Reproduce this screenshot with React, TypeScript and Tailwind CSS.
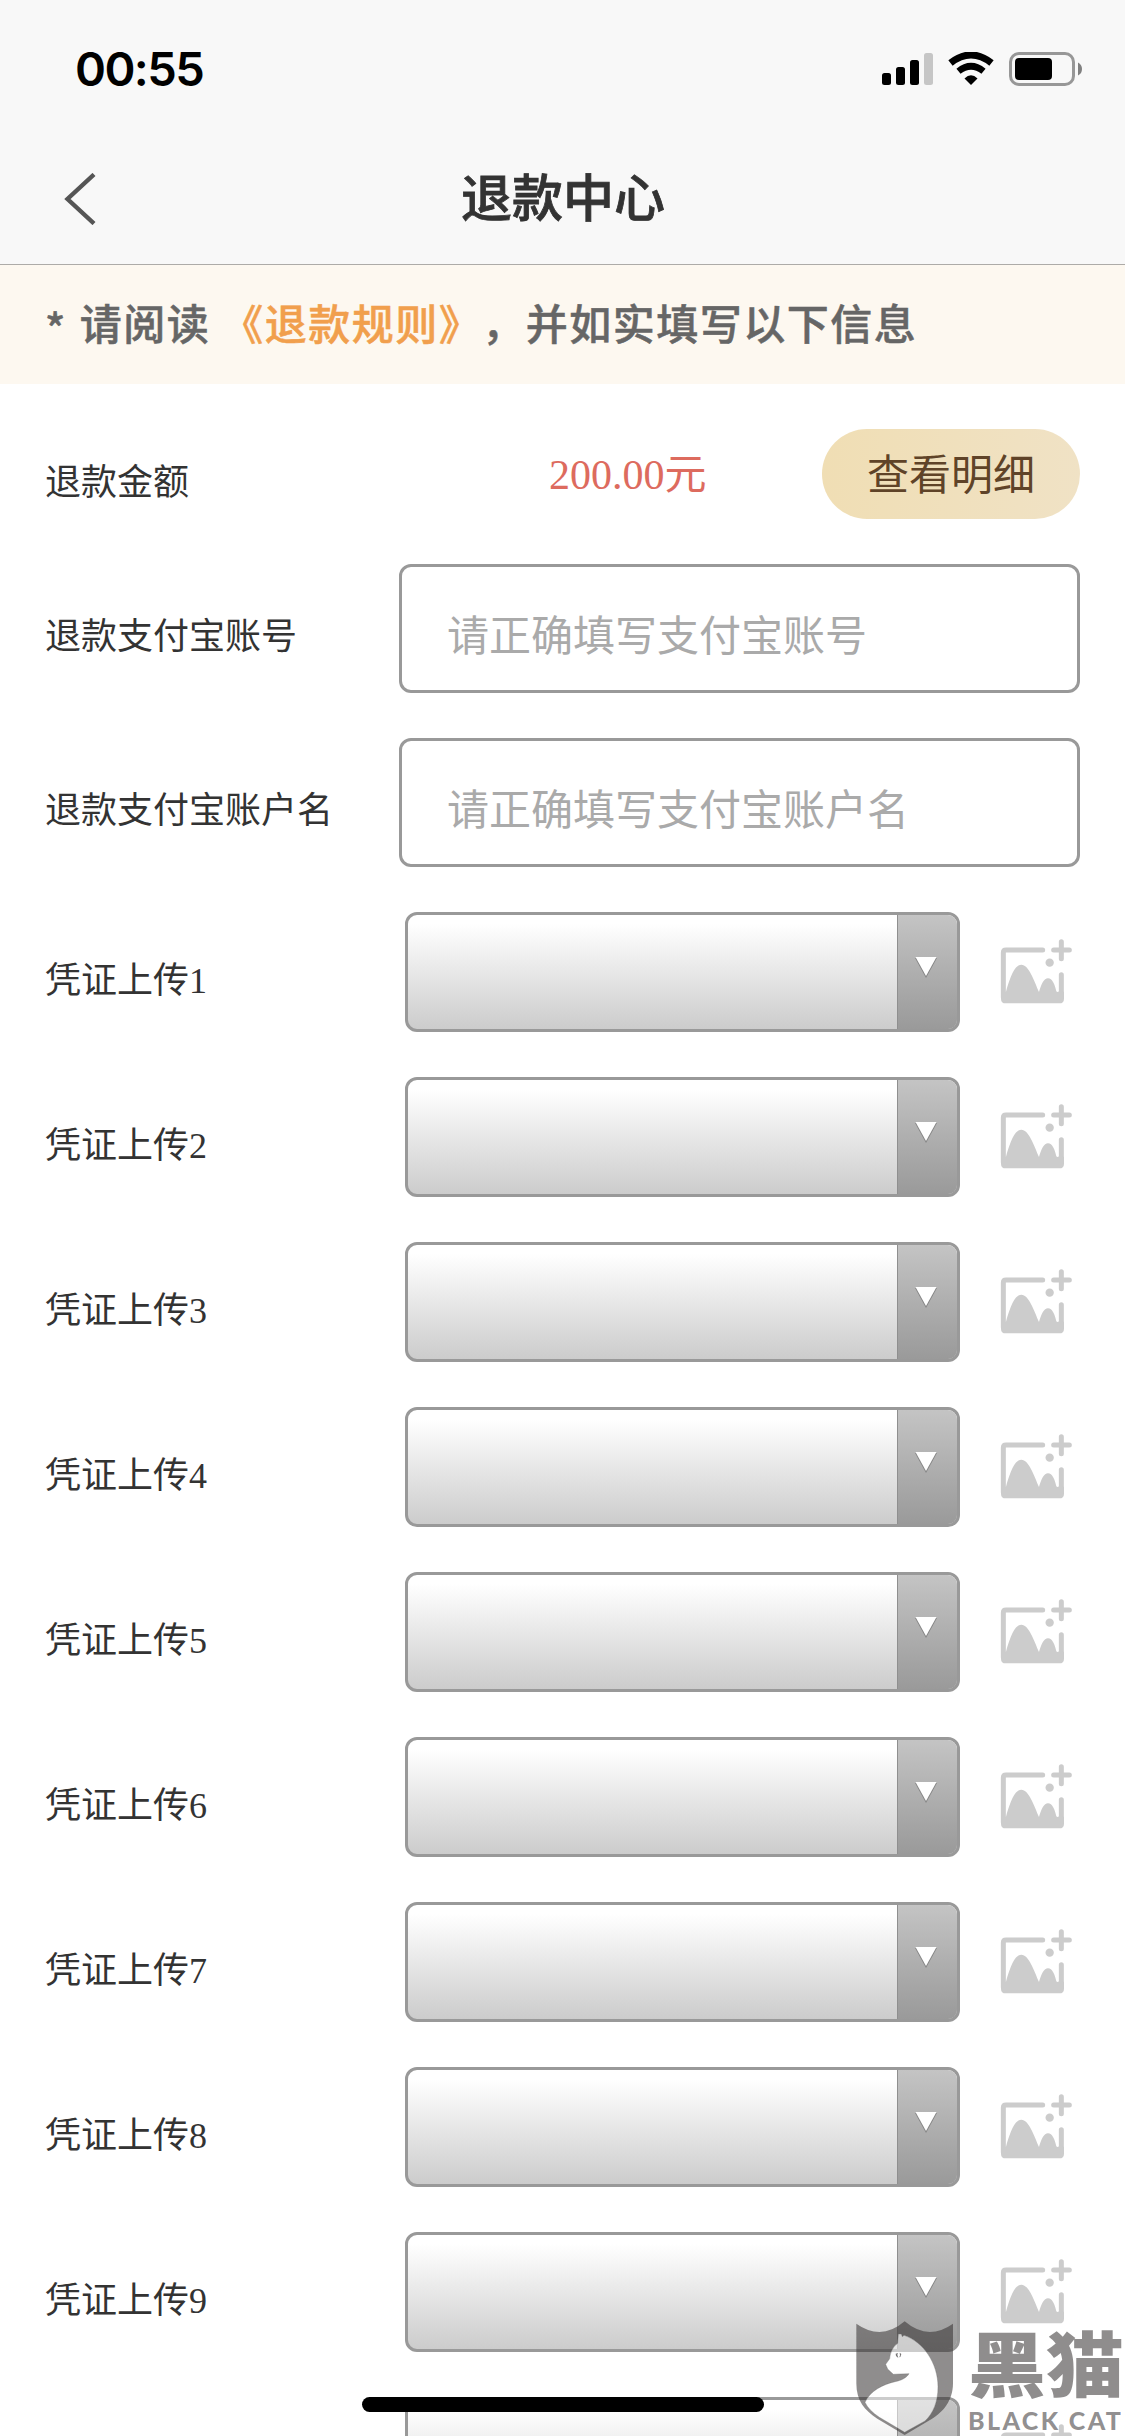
import { ReactNode } from 'react';

const vouchers = [1, 2, 3, 4, 5, 6, 7, 8, 9];

function StatusBar() {
  return (
    <div className="h-[132px] flex justify-between pl-[75px] pr-[43px] pt-[52px]">
      <span className="font-['Inter'] font-semibold text-[47px] leading-[34px] tracking-[-1.6px] text-black">
        00:55
      </span>
      <svg width="200" height="34" viewBox="0 0 200 34">
        <rect x="0" y="21" width="9" height="12" rx="2.5" />
        <rect x="14" y="15" width="9" height="18" rx="2.5" />
        <rect x="28" y="8" width="9" height="25" rx="2.5" />
        <rect x="42" y="1" width="9" height="32" rx="2.5" fill="#c6c6c6" />
        <path d="M68.500 11Q89 -5 109.500 11" fill="none" stroke="#000" strokeWidth="7" />
        <path d="M76.500 19.300Q89 9.200 101.500 19.300" fill="none" stroke="#000" strokeWidth="6.6" />
        <path d="M82.500 26.500Q89 20 95.500 26.500L89 33Z" />
        <rect x="128.500" y="1.500" width="63" height="31" rx="8.500" fill="none" stroke="#979797" strokeWidth="3" />
        <rect x="133" y="6" width="37" height="22" rx="4" />
        <path d="M196 10.500Q200 12.500 200 17Q200 21.500 196 23.500Z" fill="#808080" />
      </svg>
    </div>
  );
}

function NavBar() {
  return (
    <div className="h-[132px] flex items-start pl-[64px] pr-[95px] pt-[38px]">
      <svg width="32" height="52" viewBox="0 0 32 52" fill="none" stroke="#555555" strokeWidth="4.4" className="mt-[3px]">
        <path d="M30 1.500L3.500 26L30 50.500" />
      </svg>
      <h1 className="flex-1 text-center font-['Noto_Sans_CJK_SC',sans-serif] font-medium text-[51px] leading-[51px] text-[#333333] [-webkit-text-stroke:0.8px_#333333]">
        退款中心
      </h1>
    </div>
  );
}

function Label({ children }: { children: ReactNode }) {
  return <span className="text-[36px] leading-[40px] text-[#333333] whitespace-nowrap">{children}</span>;
}

function AccountField({ label, placeholder }: { label: string; placeholder: string }) {
  return (
    <div className="flex items-start justify-between h-[129px]">
      <div className="pt-[53px] flex">
        <Label>{label}</Label>
      </div>
      <input
        className="w-[681px] h-[129px] rounded-[12px] border-[3px] border-[#999999] bg-white px-[45px] pt-[16px] text-[42px] text-[#333333] placeholder:text-[#aaaaaa]"
        placeholder={placeholder}
      />
    </div>
  );
}

function AddImageIcon() {
  return (
    <svg width="73" height="66" viewBox="60 54 219 198" className="mt-[26px] ml-[40px]">
      <g fill="none" stroke="#cccccc" strokeWidth="15" strokeLinecap="round">
        <path d="M188 90H78Q70 90 70 98V232M244 164V232M244 65V116M221 90H268" />
      </g>
      <circle cx="209" cy="128" r="12.500" fill="#cccccc" />
      <path
        d="M63 215H78C88 180 102 134 124 134C146 134 162 180 177 216C184 192 192 175 204 175C217 175 224 193 229 214Q233 218 237 214L252 215V236Q252 250 238 250H77Q63 250 63 236Z"
        fill="#cccccc"
      />
    </svg>
  );
}

function VoucherRow({ index }: { index?: number }) {
  return (
    <div className="flex items-start h-[120px] shrink-0">
      <div className="w-[360px] pt-[49px] flex">{index && <Label>凭证上传{index}</Label>}</div>
      <div className="w-[555px] h-[120px] flex rounded-[12px] border-[3px] border-[#999999] overflow-hidden bg-linear-to-b from-white from-8% to-[#cccccc]">
        <div className="flex-1" />
        <div className="w-[60px] border-l border-[#8f8f8f] bg-linear-to-b from-[#c4c4c4] to-[#9a9a9a] flex justify-center pt-[42px]">
          <svg width="22" height="21" viewBox="0 0 22 21" className="-ml-[4px]">
            <path d="M0 1H22L11 21Z" fill="#858585" />
            <path d="M0.500 0H21.500L11 19Z" fill="#ffffff" />
          </svg>
        </div>
      </div>
      <AddImageIcon />
    </div>
  );
}

function Watermark() {
  return (
    <div className="absolute left-[856px] top-[2321px] flex">
      <svg width="98" height="115" viewBox="108 363 294 345">
        <path
          d="M109 371Q184 424 254 364Q324 424 399 371V550C399 602 368 638 335 657L254 705L172 656C134 632 109 602 109 550ZM235 402L233 430C219 440 211 456 209 476L197 493L203 507L220 523L267 521C260 533 245 541 225 545C190 553 150 572 135 607Q145 630 178 652L254 697L315 663C340 640 354 605 354 560C354 490 310 425 252 406L247 410L244 402Z"
          fill="#332f30"
          fillOpacity="0.55"
          fillRule="evenodd"
        />
        <path
          d="M235 402L233 430C219 440 211 456 209 476L197 493L203 507L220 523L267 521C260 533 245 541 225 545C190 553 150 572 135 607Q145 630 178 652L254 697L315 663C340 640 354 605 354 560C354 490 310 425 252 406L247 410L244 402Z"
          fill="#ffffff"
          fillOpacity="0.5"
          stroke="#6b696a"
          strokeWidth="2"
          strokeOpacity="0.6"
        />
        <path d="M227 461L234 459L232 464L235 474L228 468ZM239 458L244 462L241 471L238 472L240 466Z" fill="#777576" />
      </svg>
      <div className="ml-[14px] flex flex-col whitespace-nowrap text-[#332f30]/55">
        <span className="mt-[4px] h-[81px] origin-top scale-y-[0.91] font-['Noto_Sans_CJK_SC',sans-serif] font-black text-[78px] leading-[78px]">
          黑猫
        </span>
        <span className="mt-[1px] font-['Lato'] font-black text-[25px] leading-[26px] tracking-[2.4px]">
          BLACK CAT
        </span>
      </div>
    </div>
  );
}

export default function App() {
  return (
    <div className="relative w-[1125px] h-[2436px] overflow-hidden bg-white font-['Liberation_Serif','Noto_Sans_CJK_SC',serif]">
      <header className="h-[265px] bg-[#f8f8f8] border-b border-[#adaba8]">
        <StatusBar />
        <NavBar />
      </header>

      <div className="h-[119px] flex items-center pl-[45px] pb-[6px] bg-[#fdf8f0] font-['Noto_Sans_CJK_SC',sans-serif] font-medium text-[42px] tracking-[1.5px] text-[#666666] whitespace-pre [-webkit-text-stroke:0.5px]">
        <span className="mr-[2px] pt-[10px]">* </span>请阅读 <span className="text-[#f19f4d]">《退款规则》</span>，并如实填写以下信息
      </div>

      <main className="flex flex-col gap-[45px] px-[45px] pt-[45px]">
        <div className="flex items-center h-[90px]">
          <div className="w-[504px] pt-[18px] flex">
            <Label>退款金额</Label>
          </div>
          <span className="flex-1 pt-[2px] text-[42px] leading-[42px] text-[#dd6b5e]">200.00元</span>
          <button className="w-[258px] h-[90px] pt-[4px] rounded-full bg-linear-to-r from-[#f0deb4] to-[#f0e2c5] text-[42px] text-[#5f4328]">
            查看明细
          </button>
        </div>
        <AccountField label="退款支付宝账号" placeholder="请正确填写支付宝账号" />
        <AccountField label="退款支付宝账户名" placeholder="请正确填写支付宝账户名" />
        {vouchers.map((index) => (
          <VoucherRow key={index} index={index} />
        ))}
        <VoucherRow />
      </main>

      <div className="absolute left-[362px] top-[2397px] w-[402px] h-[15px] rounded-full bg-black" />
      <Watermark />
    </div>
  );
}
